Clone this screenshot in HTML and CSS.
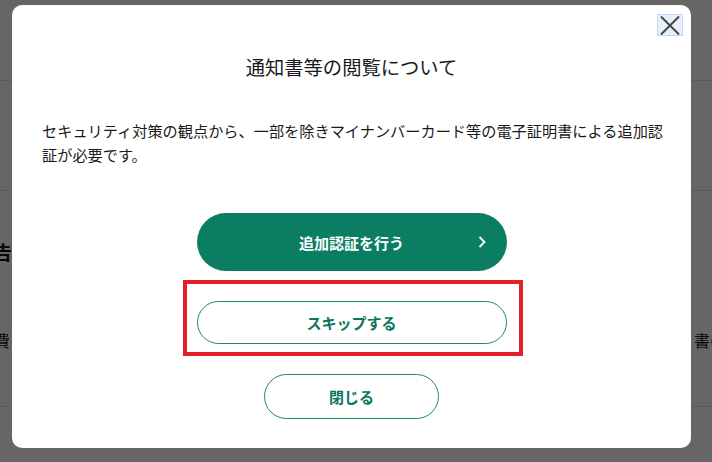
FILE: index.html
```html
<!DOCTYPE html>
<html lang="ja">
<head>
<meta charset="utf-8">
<title>通知書等の閲覧について</title>
<link rel="stylesheet" href="styles.css">
</head>
<body>
<div class="page">
  <header class="pageHead"></header>
  <section class="pageBand"></section>
  <section class="pageMain">
    <h2 class="mainTitle">報告</h2>
    <div class="mainRow">
      <span class="rowLeft">経費</span>
      <span class="rowRight">書の</span>
    </div>
  </section>
</div>

<div class="overlay">
  <div class="modal">
    <button class="closeX" aria-label="閉じる">
      <svg width="20" height="19" viewBox="0 0 20 19"><path d="M1 0.5 L19 18.5 M19 0.5 L1 18.5" stroke="#444" stroke-width="2" fill="none"/></svg>
    </button>
    <h1 class="modalTitle">通知書等の閲覧について</h1>
    <p class="modalText">セキュリティ対策の観点から、一部を除きマイナンバーカード等の電子証明書による追加認証が必要です。</p>
    <button class="btnMain">追加認証を行う
      <svg class="chev" width="10" height="14" viewBox="0 0 10 14"><path d="M2.5 2 L7.5 7 L2.5 12" stroke="#fff" stroke-width="1.8" fill="none"/></svg>
    </button>
    <div class="skipWrap">
      <button class="btnLine btnSkip">スキップする</button>
      <span class="redMark"></span>
    </div>
    <button class="btnLine btnClose">閉じる</button>
  </div>
</div>
</body>
</html>
```

FILE: styles.css
```css
* {
  margin: 0;
  padding: 0;
  box-sizing: border-box;
}
body {
  width: 712px;
  height: 462px;
  overflow: hidden;
  background: #fff;
  font-family: "Noto Sans CJK JP", "Noto Sans", sans-serif;
  color: #1a1a1a;
}
.pageHead {
  height: 81px;
  border-bottom: 1px solid #e4e4e4;
}
.pageBand {
  height: 110px;
  border-bottom: 1px solid #e4e4e4;
}
.pageMain {
  height: 216px;
  padding-top: 47px;
  border-bottom: 1px solid #e4e4e4;
}
.mainTitle {
  font-size: 19px;
  line-height: 28px;
  font-weight: bold;
  text-indent: -26px;
  color: #111;
}
.mainRow {
  margin-top: 62px;
  display: grid;
  grid-template-columns: 694px auto;
  font-size: 16px;
  line-height: 24px;
  white-space: nowrap;
  overflow: hidden;
}
.rowLeft {
  text-indent: -22px;
}
.overlay {
  position: fixed;
  inset: 0;
  background: rgba(0, 0, 0, 0.6);
}
.modal {
  position: relative;
  margin: 5px 0 0 12px;
  width: 679px;
  height: 443px;
  background: #fff;
  border-radius: 10px;
  padding: 48px 30px 0;
  display: flex;
  flex-direction: column;
  align-items: center;
}
.closeX {
  position: absolute;
  top: 9px;
  right: 8px;
  width: 26px;
  height: 22px;
  border: 1px solid #c4d8f6;
  background: #e8f0fc;
  display: flex;
  align-items: center;
  justify-content: center;
}
.modalTitle {
  font-size: 19.3px;
  line-height: 28px;
  font-weight: normal;
}
.modalText {
  margin-top: 37px;
  margin-right: -8px;
  align-self: stretch;
  font-size: 15.2px;
  line-height: 24px;
}
button {
  font-family: inherit;
  cursor: pointer;
}
.btnMain {
  position: relative;
  margin-top: 47px;
  width: 310px;
  height: 58px;
  border: none;
  border-radius: 29px;
  background: #0b7d62;
  color: #fff;
  font-size: 15px;
  font-weight: bold;
}
.chev {
  position: absolute;
  right: 20px;
  top: 22px;
}
.skipWrap {
  position: relative;
  margin-top: 30px;
}
.btnLine {
  display: block;
  background: #fff;
  border: 1px solid #1a8a6f;
  color: #0b7560;
  font-size: 15px;
  font-weight: bold;
}
.btnSkip {
  width: 310px;
  height: 43px;
  border-radius: 22px;
}
.redMark {
  position: absolute;
  top: -21px;
  left: -14px;
  right: -16px;
  bottom: -12px;
  border: 4px solid #e3202a;
}
.btnClose {
  margin-top: 30px;
  width: 175px;
  height: 45px;
  border-radius: 23px;
}
```
